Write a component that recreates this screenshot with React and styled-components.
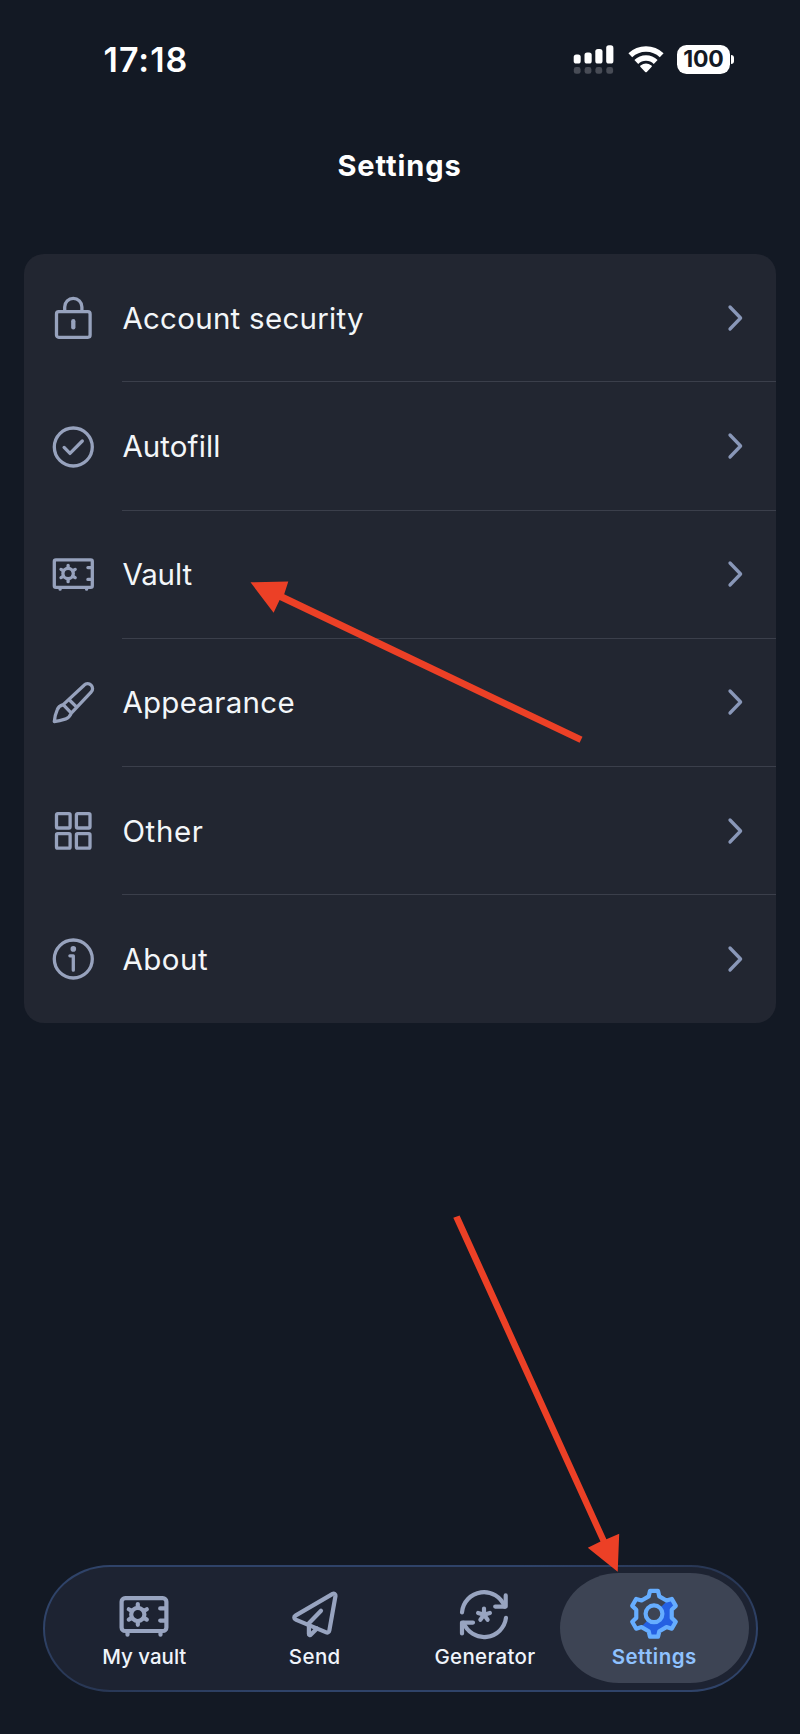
import React from "react";
import styled, { createGlobalStyle } from "styled-components";

const Global = createGlobalStyle`
  * { box-sizing: border-box; }
  body { margin: 0; background: #131924; }
`;

const Screen = styled.div`
  position: relative;
  display: flex;
  flex-direction: column;
  width: 800px;
  height: 1734px;
  overflow: hidden;
  background: #131924;
  font-family: "Inter", "Liberation Sans", sans-serif;
  color: #f3f6f9;
`;

const StatusBar = styled.header`
  display: flex;
  align-items: center;
  justify-content: space-between;
  height: 118px;
  padding: 0 66px 0 103.5px;
`;

const Clock = styled.time`
  margin-top: 2px;
  font-size: 34px;
  font-weight: 600;
  line-height: 40px;
  letter-spacing: 1px;
  color: #fff;
`;

const StatusIcons = styled.div`
  display: flex;
  align-items: center;
  gap: 13.5px;
`;

const Battery = styled.div`
  display: flex;
  align-items: center;
  gap: 1px;
`;

const BatteryLevel = styled.span`
  display: flex;
  align-items: center;
  justify-content: center;
  width: 53px;
  height: 29px;
  border-radius: 9.5px;
  background: #fff;
  color: #131924;
  font-size: 23px;
  font-weight: 700;
  line-height: 29px;
  letter-spacing: -0.2px;
`;

const BatteryTip = styled.span`
  width: 3px;
  height: 9px;
  border-radius: 0 4px 4px 0;
  background: #fff;
`;

const Title = styled.h1`
  margin: 30px 0 0;
  height: 36px;
  text-align: center;
  font-size: 29px;
  font-weight: 700;
  line-height: 36px;
  letter-spacing: 0.9px;
  text-indent: -1px;
  color: #fff;
`;

const Card = styled.ul`
  list-style: none;
  margin: 70.3px 24.4px 0;
  padding: 0;
  border-radius: 20px;
  background: #222631;
`;

const Row = styled.li`
  display: flex;
  align-items: stretch;
  height: 128.2px;
  padding-left: 27.6px;
`;

const RowIcon = styled.svg`
  flex: none;
  align-self: center;
  width: 42px;
  height: 42px;
  margin-right: 28px;
  overflow: visible;
  fill: none;
  stroke: #97a2bd;
  stroke-width: 3.3px;
  stroke-linecap: round;
  stroke-linejoin: round;
`;

const RowBody = styled.div`
  flex: 1;
  display: flex;
  align-items: center;
  justify-content: space-between;
  padding: 0 33.6px 0 0.4px;
  border-bottom: 1px solid ${(p) => (p.$last ? "transparent" : "#3b3f4b")};
`;

const RowLabel = styled.span`
  font-size: 29.5px;
  line-height: 36px;
  letter-spacing: ${(p) => p.$track}px;
`;

const ChevronSvg = styled.svg`
  width: 14px;
  height: 26px;
  overflow: visible;
  fill: none;
  stroke: #8997b8;
  stroke-width: 3.3px;
  stroke-linecap: round;
  stroke-linejoin: round;
`;

const TabBar = styled.nav`
  display: flex;
  align-items: center;
  margin: auto 42.5px 42.5px 43px;
  height: 126.5px;
  padding-left: 14px;
  border: 2px solid transparent;
  border-radius: 67px / 63px;
  background:
    linear-gradient(#1d2332, #1d2332) padding-box,
    linear-gradient(15deg, transparent 0%, #2f4369 20%, #2f4369 80%, transparent 100%) border-box,
    linear-gradient(#26334e, #26334e) border-box;
`;

const Tab = styled.div`
  display: flex;
  flex-direction: column;
  align-items: center;
  gap: 5px;
  flex: 0 0 ${(p) => p.$width}px;
  height: 110px;
  margin-left: ${(p) => (p.$active ? -10.2 : 0)}px;
  padding-top: 15.5px;
  border-radius: 59px / 55px;
  background: ${(p) => (p.$active ? "#3d4454" : "transparent")};
  color: ${(p) => (p.$active ? "#8fc2ff" : "#f0f4fb")};
`;

const TabIcon = styled.svg`
  width: 50px;
  height: 50px;
  margin-left: ${(p) => p.$shift || 0}px;
  overflow: visible;
  fill: none;
  stroke: #98a4c0;
  stroke-width: 4.2px;
  stroke-linecap: round;
  stroke-linejoin: round;
`;

const TabLabel = styled.span`
  font-size: 20.5px;
  font-weight: ${(p) => (p.$active ? 600 : 500)};
  line-height: 26px;
  letter-spacing: ${(p) => p.$track}px;
`;

const Annotations = styled.svg`
  position: absolute;
  inset: 0;
  width: 800px;
  height: 1734px;
  pointer-events: none;
`;

const polar = (cx, cy, r, deg) => {
  const a = (deg * Math.PI) / 180;
  return `${(cx + r * Math.cos(a)).toFixed(2)} ${(cy + r * Math.sin(a)).toFixed(2)}`;
};

const spokes = (cx, cy, inner, outer, count) =>
  Array.from({ length: count }, (_, i) => {
    const deg = -90 + (i * 360) / count;
    return `M${polar(cx, cy, inner, deg)}L${polar(cx, cy, outer, deg)}`;
  }).join("");

const cogPath = (cx, cy) =>
  "M" +
  Array.from({ length: 6 }, (_, i) => {
    const d = -90 + i * 60;
    return [
      polar(cx, cy, 18.2, d - 17),
      polar(cx, cy, 23.2, d - 10),
      polar(cx, cy, 23.2, d + 10),
      polar(cx, cy, 18.2, d + 17),
    ].join("L");
  }).join("L") +
  "Z";

const Signal = () => (
  <svg width="41" height="29" viewBox="0 0 41 29">
    <g fill="#fff">
      <rect x="0.7" y="9.5" width="7" height="9" rx="2.6" />
      <rect x="11.5" y="7.5" width="7.2" height="11" rx="2.6" />
      <rect x="22.3" y="4" width="7.2" height="14.5" rx="2.6" />
      <rect x="33.2" y="0.3" width="7.2" height="18.2" rx="2.6" />
    </g>
    <g fill="#484c56">
      {[0.8, 11.6, 22.4, 33.3].map((x) => (
        <rect key={x} x={x} y="22" width="6.8" height="6.8" rx="2.4" />
      ))}
    </g>
  </svg>
);

const Wifi = () => (
  <svg width="36" height="28" viewBox="0 0 36 28" fill="none" stroke="#fff" strokeWidth="5.5">
    <path d="M2.3 10.3a22.8 22.8 0 0 1 31.4 0" />
    <path d="M8.3 17a14 14 0 0 1 19.4 0" />
    <path d="M17.2 26.9l-4.9-5.1q-.6-.7.2-1.2a9 9 0 0 1 11 0q.8.5.2 1.2l-4.9 5.1q-.8.7-1.6 0z" fill="#fff" stroke="none" />
  </svg>
);

const KeyholeSlot = styled.path`
  stroke-width: 4.3px;
`;

const rowIcons = {
  lock: (
    <>
      <rect x="4.2" y="14.7" width="33.6" height="25.6" rx="2.2" />
      <path d="M12.4 14V10a8.6 8.6 0 0 1 17.2 0v4" />
      <KeyholeSlot d="M21 24.2v6.2" />
    </>
  ),
  check: (
    <>
      <circle cx="21" cy="21" r="19" />
      <path d="M11.8 21.4l5.9 6 12.3-12.4" />
    </>
  ),
  vault: (
    <>
      <rect x="2" y="5.9" width="38" height="27.4" rx="1.6" />
      <circle cx="15.8" cy="19.5" r="5.2" />
      <path d={spokes(15.8, 19.5, 5.4, 8.2, 6)} />
      <path d="M35.6 13.6h4M35.6 25.4h4M7.8 34v1.2M34.3 34v1.2" />
    </>
  ),
  brush: (
    <path d="M10.9 22.6 31.8 3.2a4.9 4.9 0 0 1 7 7L19 31.2Q17 35.8 13.6 36.8Q7 38.9 2 39.6Q2.6 33 5 27.6Q6.3 24 10.9 22.6ZM10.9 22.6l7.9 8.3M16.6 17.5l7.8 7.7" />
  ),
  grid: (
    <>
      <rect x="4.2" y="3.6" width="13.6" height="14.4" rx="1.2" />
      <rect x="24.1" y="3.6" width="13.6" height="14.4" rx="1.2" />
      <rect x="4.2" y="23.7" width="13.6" height="14.4" rx="1.2" />
      <rect x="24.1" y="23.7" width="13.6" height="14.4" rx="1.2" />
    </>
  ),
  info: (
    <>
      <circle cx="21" cy="21" r="19" />
      <circle cx="21" cy="10.9" r="2.8" fill="#97a2bd" stroke="none" />
      <path d="M17.6 17.8H21v14.4" />
    </>
  ),
};

const tabIcons = {
  vault: (
    <>
      <rect x="2.6" y="9.2" width="44.8" height="32.8" rx="3.6" />
      <circle cx="18.8" cy="25.4" r="6.6" />
      <path d={spokes(18.8, 25.4, 7, 10.4, 6)} />
      <path d="M41.2 19.4h5M41.2 31.6h5M8.5 42.5v3.2M41.5 42.5v3.2" />
    </>
  ),
  send: (
    <>
      <path d="M42.7 4.9 5.4 26.6a2.2 2.2 0 0 0 .3 4L36.3 43.4a2.2 2.2 0 0 0 3-1.7L45.5 6.8a1.9 1.9 0 0 0-2.8-1.9z" />
      <path d="M31 21.7 18.9 34.3v10.7a1 1 0 0 0 1.8.7L27 39.6" />
    </>
  ),
  generator: (
    <>
      <path d="M3 23.3A22 22 0 0 1 45.6 17.6" />
      <path d="M46.7 6.4v11.2H36.2" />
      <path d="M47 28.8A22 22 0 0 1 4.6 33.8" />
      <path d="M3 44.4V33.6h11" />
      <path d={spokes(25, 25.8, 0, 6.2, 5)} />
    </>
  ),
  settings: (
    <>
      <clipPath id="cog-shade">
        <path d="M54 -4V54H-4z" />
      </clipPath>
      <path d={cogPath(25, 24.8)} fill="#2560e2" stroke="none" clipPath="url(#cog-shade)" />
      <circle cx="25" cy="24.8" r="8.4" fill="#3d4454" stroke="#66adff" />
      <path d={cogPath(25, 24.8)} stroke="#66adff" />
    </>
  ),
};

const rows = [
  { icon: "lock", label: "Account security", track: 0.27 },
  { icon: "check", label: "Autofill", track: 0.1 },
  { icon: "vault", label: "Vault", track: -0.1 },
  { icon: "brush", label: "Appearance", track: 0.28 },
  { icon: "grid", label: "Other", track: 0.65 },
  { icon: "info", label: "About", track: 0.5 },
];

const tabs = [
  { icon: "vault", label: "My vault", track: 0, width: 170.5, shift: -1 },
  { icon: "send", label: "Send", track: 0.4, width: 170.5 },
  { icon: "generator", label: "Generator", track: 0.3, width: 170, shift: -1.4 },
  { icon: "settings", label: "Settings", track: 0.45, width: 188.8, active: true },
];

export default function App() {
  return (
    <>
      <Global />
      <Screen>
        <StatusBar>
          <Clock>17:18</Clock>
          <StatusIcons>
            <Signal />
            <Wifi />
            <Battery>
              <BatteryLevel>100</BatteryLevel>
              <BatteryTip />
            </Battery>
          </StatusIcons>
        </StatusBar>
        <Title>Settings</Title>
        <Card>
          {rows.map((row, i) => (
            <Row key={row.label}>
              <RowIcon viewBox="-0.3 0 42 42">{rowIcons[row.icon]}</RowIcon>
              <RowBody $last={i === rows.length - 1}>
                <RowLabel $track={row.track}>{row.label}</RowLabel>
                <ChevronSvg viewBox="0 0 14 26">
                  <path d="M2 2l10.6 11L2 24" />
                </ChevronSvg>
              </RowBody>
            </Row>
          ))}
        </Card>
        <TabBar>
          {tabs.map((tab) => (
            <Tab key={tab.label} $active={tab.active} $width={tab.width}>
              <TabIcon viewBox="0 0 50 50" $shift={tab.shift}>{tabIcons[tab.icon]}</TabIcon>
              <TabLabel $track={tab.track} $active={tab.active}>{tab.label}</TabLabel>
            </Tab>
          ))}
        </TabBar>
        <Annotations viewBox="0 0 800 1734" fill="#ec4026">
          <path d="M250.5 582.3L288.3 581.5L284.2 594.2L582.5 736.8L579.6 742.8L279.6 600L273.6 612.7Z" />
          <path d="M617.7 1571.8L587.8 1547.7L600.5 1541.6L453.3 1217.8L459.6 1215.4L606.4 1539.3L619.2 1533.8Z" />
        </Annotations>
      </Screen>
    </>
  );
}
